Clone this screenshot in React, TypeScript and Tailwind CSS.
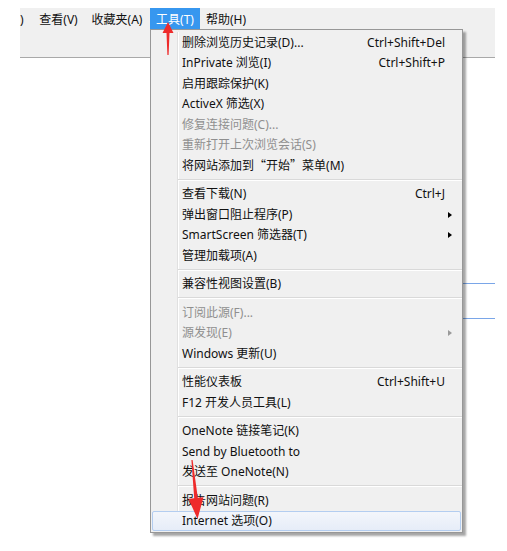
import React from 'react';

type Item = {
  label: React.ReactNode;
  shortcut?: string;
  sub?: boolean;
  disabled?: boolean;
  active?: boolean;
};

// Groups split by separators, same order as the IE "工具" menu.
const groups: Item[][] = [
  [
    { label: '删除浏览历史记录(D)...', shortcut: 'Ctrl+Shift+Del' },
    { label: 'InPrivate 浏览(I)', shortcut: 'Ctrl+Shift+P' },
    { label: '启用跟踪保护(K)' },
    { label: 'ActiveX 筛选(X)' },
    { label: '修复连接问题(C)...', disabled: true },
    { label: '重新打开上次浏览会话(S)', disabled: true },
    {
      label: (
        <>
          将网站添加到<span className="font-['Noto_Sans_CJK_SC',sans-serif]">“开始”</span>菜单(M)
        </>
      ),
    },
  ],
  [
    { label: '查看下载(N)', shortcut: 'Ctrl+J' },
    { label: '弹出窗口阻止程序(P)', sub: true },
    { label: 'SmartScreen 筛选器(T)', sub: true },
    { label: '管理加载项(A)' },
  ],
  [{ label: '兼容性视图设置(B)' }],
  [
    { label: '订阅此源(F)...', disabled: true },
    { label: '源发现(E)', disabled: true, sub: true },
    { label: 'Windows 更新(U)' },
  ],
  [
    { label: '性能仪表板', shortcut: 'Ctrl+Shift+U' },
    { label: 'F12 开发人员工具(L)' },
  ],
  [
    { label: 'OneNote 链接笔记(K)' },
    { label: 'Send by Bluetooth to' },
    { label: '发送至 OneNote(N)' },
  ],
  [{ label: '报告网站问题(R)' }, { label: 'Internet 选项(O)', active: true }],
];

function MenuRow({ item }: { item: Item }) {
  return (
    <div
      className={`mx-px flex h-[20.5px] items-center rounded-[2px] border pl-[29px] pt-px ${
        item.active
          ? 'border-[#b3cdf0] bg-[linear-gradient(to_bottom,#f3f6fb,#e6edf8)]'
          : 'border-transparent'
      } ${item.disabled ? 'text-[#8f8f8f]' : 'text-[#111]'}`}
    >
      <span className="flex-1 whitespace-nowrap">{item.label}</span>
      {item.shortcut && <span className="whitespace-nowrap">{item.shortcut}</span>}
      <div className="flex w-[15px] pl-[3px]">
        {item.sub && (
          <span
            className={`h-0 w-0 border-y-[3.5px] border-l-[4px] border-y-transparent ${
              item.disabled ? 'border-l-[#9a9a9a]' : 'border-l-black'
            }`}
          />
        )}
      </div>
    </div>
  );
}

function Separator() {
  return (
    <div className="flex h-[8px] items-center pl-[27px]">
      <div className="h-0 flex-1 border-t border-b border-t-[#d9d9d9] border-b-white" />
    </div>
  );
}

export default function App() {
  const bar = [
    { label: ')', w: 'w-[13px] justify-start' },
    { label: '查看(V)', w: 'w-[51px] justify-center' },
    { label: '收藏夹(A)', w: 'w-[66px] justify-center' },
    { label: '工具(T)', w: 'w-[50px] justify-center', on: true },
    { label: '帮助(H)', w: 'w-[52px] justify-center' },
  ];

  return (
    <div className="relative h-[551px] w-[507px] overflow-hidden bg-white font-['Noto_Sans','Noto_Sans_CJK_SC',sans-serif] text-[12px] leading-none text-[#111]">
      <div className="pt-[8px] pl-[20px] pr-[12px]">
        {/* menubar + toolbar strip */}
        <div className="h-[50px] border-b border-[#a9a9a9] bg-[#f0f0f0]">
          <div className="flex h-[22px]">
            {bar.map((b) => (
              <div
                key={b.label}
                className={`flex items-center pt-px ${b.w} ${b.on ? 'bg-[#3797ef] text-white' : ''}`}
              >
                {b.label}
              </div>
            ))}
          </div>
        </div>
        {/* page lines peeking out on the right */}
        <div className="ml-[130px] mt-[225px] h-px bg-[#7aa6e8]" />
        <div className="ml-[130px] mt-[34px] h-px bg-[#7aa6e8]" />
      </div>

      {/* dropdown */}
      <div className="absolute left-[150px] top-[29px] w-[313px] border border-[#979797] bg-[#f0f0f0] pt-[2px] pb-[1px] shadow-[3px_3px_2px_rgba(0,0,0,0.35)]">
        <div className="bg-[linear-gradient(to_right,transparent_26px,#e0e0e0_26px,#e0e0e0_27px,#fff_27px,#fff_28px,transparent_28px)]">
          {groups.map((g, i) => (
            <div key={i}>
              {i > 0 && <Separator />}
              {g.map((item, j) => (
                <MenuRow key={j} item={item} />
              ))}
            </div>
          ))}
        </div>
      </div>

      {/* red annotation arrows */}
      <svg className="pointer-events-none absolute left-0 top-0" width="507" height="551">
        <polygon
          points="168,22 173.5,33 169.5,33 168.6,55 167.4,55 166.5,33 162.5,33"
          fill="#ee2b2b"
        />
        <polygon
          points="191.4,460 192.6,460 197.8,497.8 203.5,497.3 197.5,519 188.5,498.7 194.2,498.2"
          fill="#ee2b2b"
        />
      </svg>
    </div>
  );
}
